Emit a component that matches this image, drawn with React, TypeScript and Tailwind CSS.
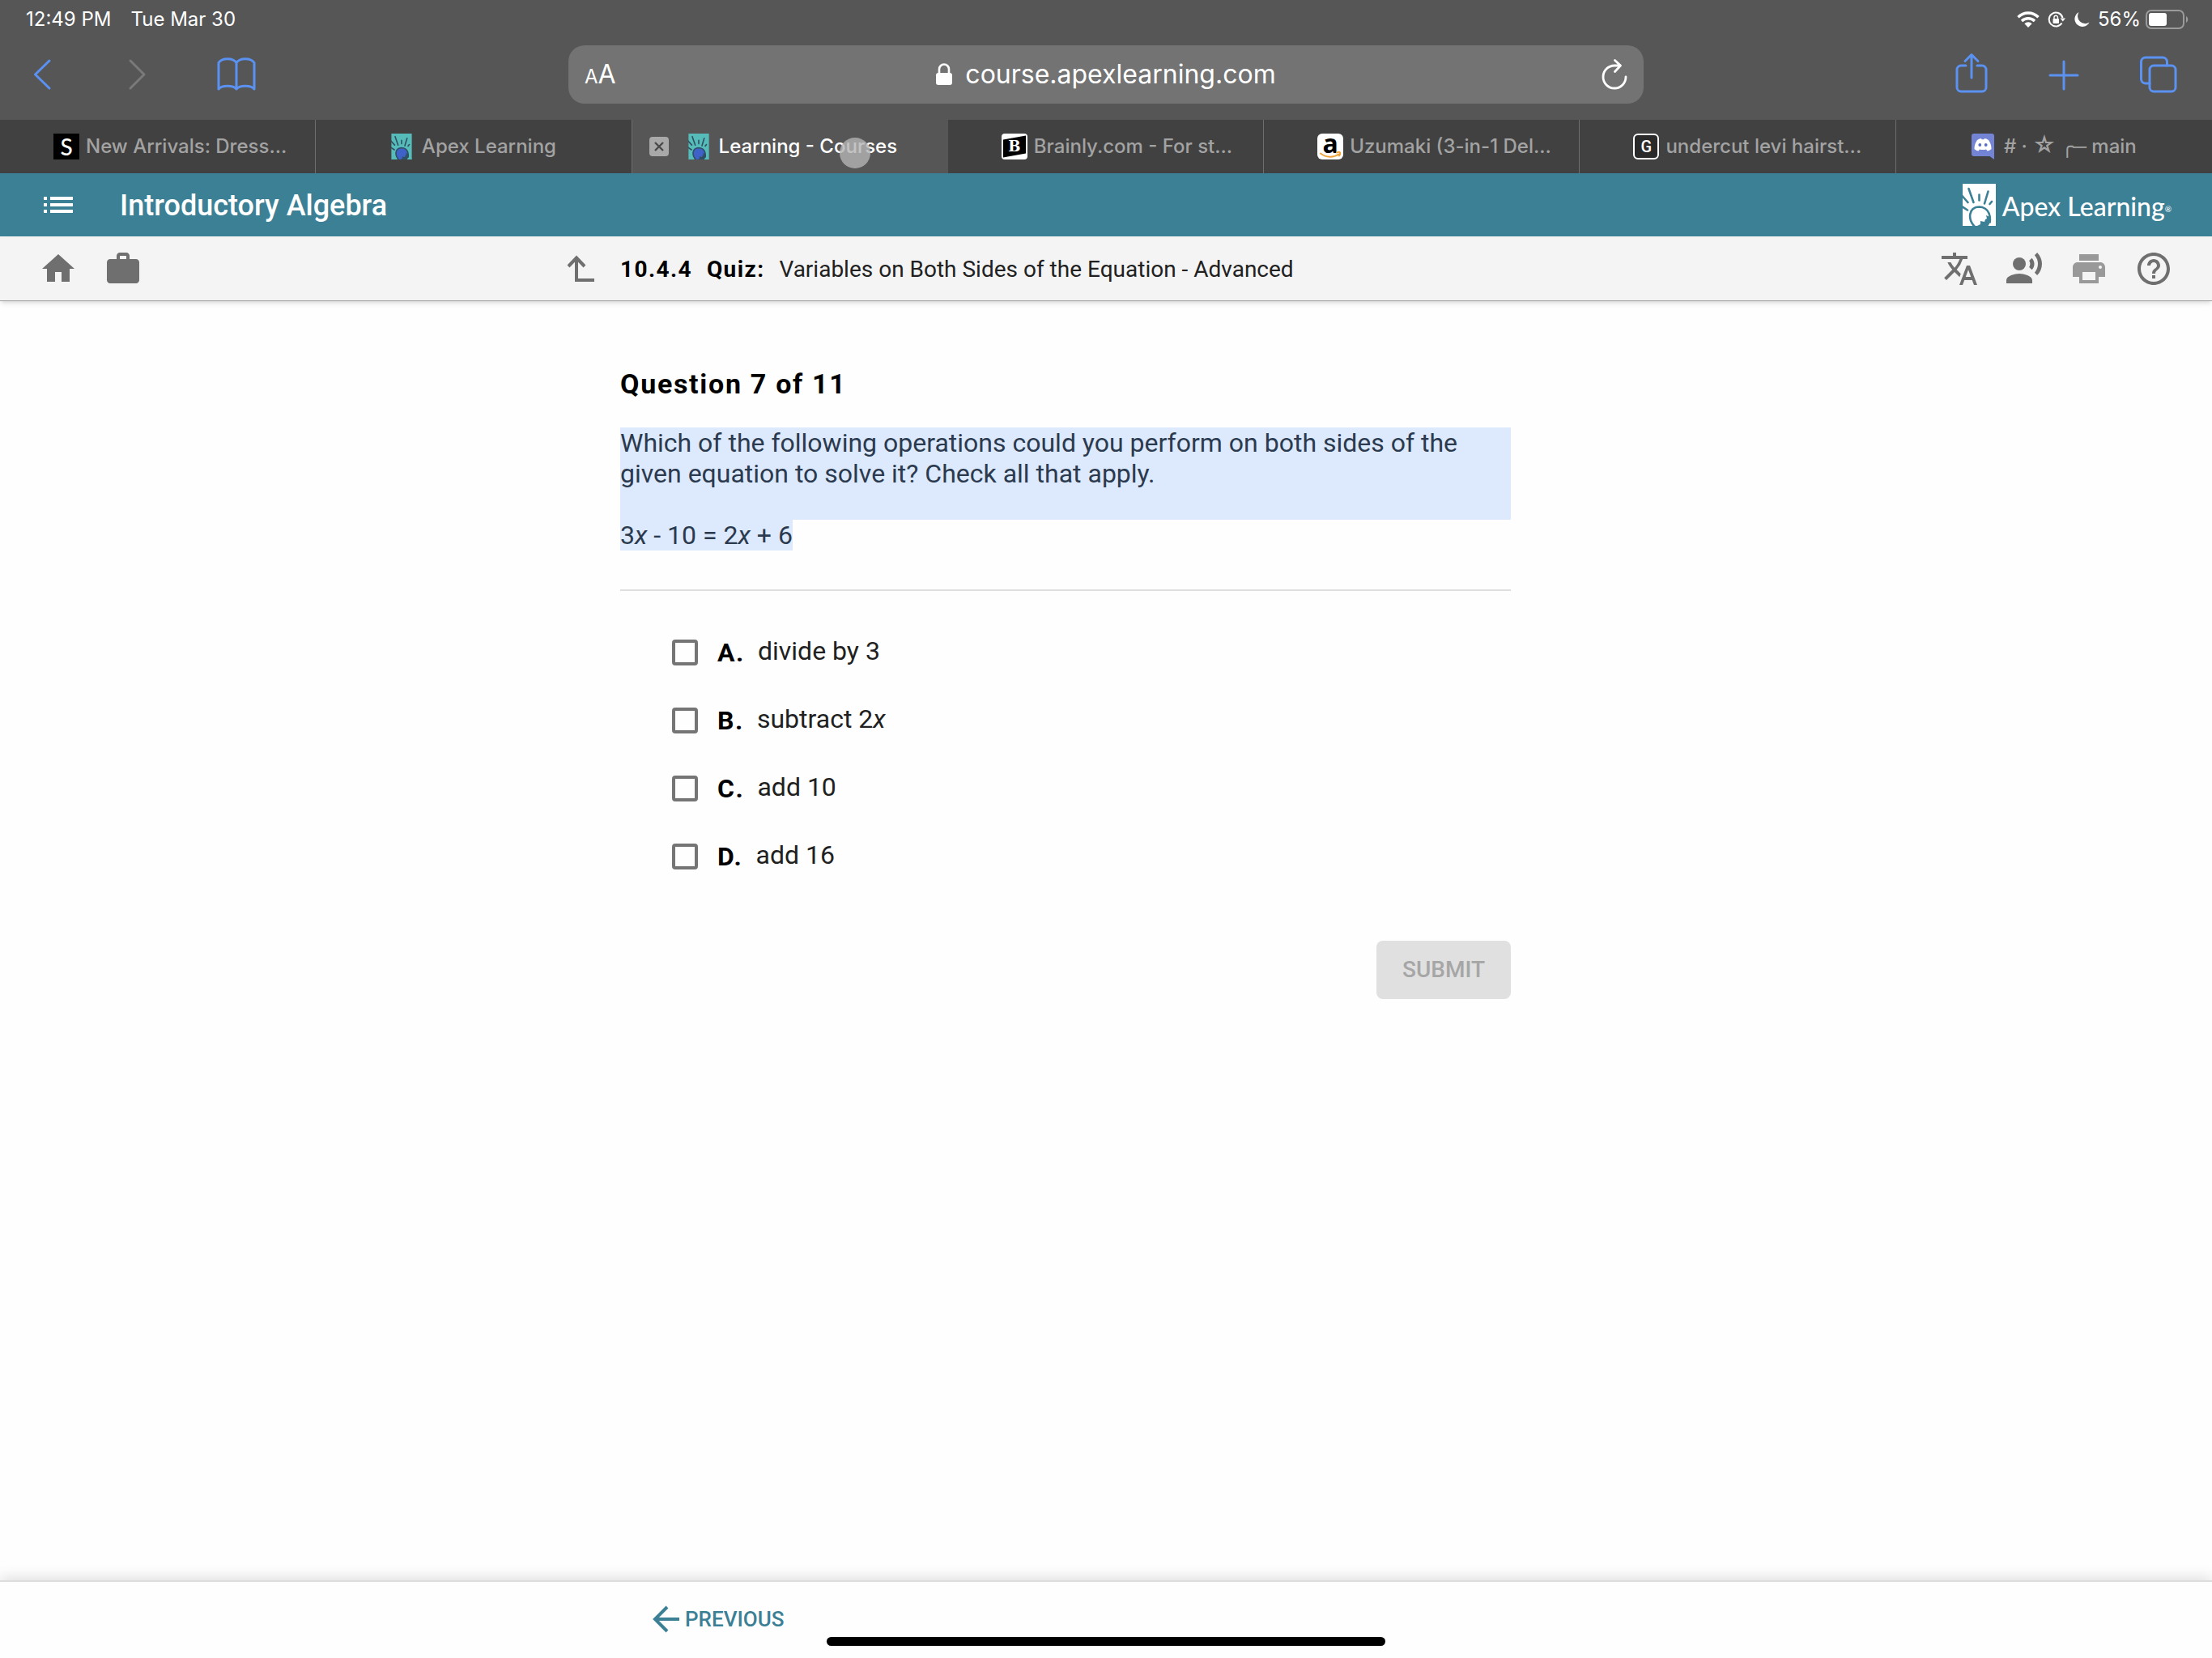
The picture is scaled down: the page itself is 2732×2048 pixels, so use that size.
import type { ReactNode } from "react";
import {
  MdHelpOutline,
  MdHome,
  MdList,
  MdPrint,
  MdRecordVoiceOver,
  MdTranslate,
  MdWork,
} from "react-icons/md";

type Tab = {
  title: ReactNode;
  icon: ReactNode;
  active?: boolean;
  long?: boolean;
};

const tabs: Tab[] = [
  { title: "New Arrivals: Dress...", icon: <SheinIcon />, long: true },
  { title: "Apex Learning", icon: <ApexFavicon /> },
  { title: "Learning - Courses", icon: <ApexFavicon />, active: true },
  { title: "Brainly.com - For st...", icon: <BrainlyIcon />, long: true },
  { title: "Uzumaki (3-in-1 Del...", icon: <AmazonIcon />, long: true },
  { title: "undercut levi hairst...", icon: <GIcon />, long: true },
  {
    title: (
      <span>
        # · <span className="text-[28px] leading-6">☆</span> ╭─ main
      </span>
    ),
    icon: <DiscordIcon />,
  },
];

const options: { letter: string; text: ReactNode }[] = [
  { letter: "A", text: "divide by 3" },
  {
    letter: "B",
    text: (
      <>
        subtract 2<i>x</i>
      </>
    ),
  },
  { letter: "C", text: "add 10" },
  { letter: "D", text: "add 16" },
];

function SheinIcon() {
  return (
    <span className="flex size-8 shrink-0 items-center justify-center bg-black font-['Lato'] text-[28px] leading-8 text-white">
      S
    </span>
  );
}

function ApexMark({
  className,
  bg,
  line,
  face,
}: {
  className: string;
  bg: string;
  line: string;
  face: string;
}) {
  return (
    <svg viewBox="0 0 41 52" className={className} aria-hidden="true">
      <path fill={bg} d="M0 0h41v52H0z" />
      <path
        fill={face}
        stroke={line}
        strokeWidth="2.6"
        d="M15 53C6 44 7 29 20.500 28.500C33 29 36 41 32.500 53"
      />
      <path fill={line} d="M18 52l4-2v-4l5 1 1-3 2-1-1-4 5 2-1 11z" />
      <g stroke={line} strokeWidth="2.6" strokeLinecap="round" fill="none">
        <path d="M7.500 6l6 17M20.500 13.500v7M31.500 9.500l-4.500 15M36 22l-2.500 3" />
        <path d="M-1 14.500l7.500 8.500M-1 28l7 4.500" />
      </g>
      <path fill={bg} d="M33.500 48.500h7V52h-9z" />
    </svg>
  );
}

function ApexFavicon() {
  return (
    <ApexMark
      className="h-8 w-[26px] shrink-0"
      bg="#56bcb9"
      line="#2f4f63"
      face="#3f62c8"
    />
  );
}

function BrainlyIcon() {
  return (
    <span className="relative flex size-8 shrink-0 items-center justify-center overflow-hidden rounded-sm bg-white">
      <svg viewBox="0 0 32 32" className="absolute inset-0" aria-hidden="true">
        <path d="M2 7.500L30 2.500v22L2 29.500z" />
      </svg>
      <span className="relative font-['DejaVu_Serif'] text-[18px] leading-8 font-bold text-white">
        B
      </span>
    </span>
  );
}

function AmazonIcon() {
  return (
    <span className="relative flex size-8 shrink-0 justify-center rounded-md bg-white">
      <span className="font-['Open_Sans'] text-[32px] leading-6 font-bold text-black">
        a
      </span>
      <svg
        viewBox="0 0 32 32"
        className="absolute inset-0"
        fill="none"
        stroke="#f0a33a"
        strokeWidth="2"
        strokeLinecap="round"
        aria-hidden="true"
      >
        <path d="M4 24.500c7 5.500 16 5.500 22.500 1M24 23.500c2-.8 3.500-.8 4 0s0 2.500-1 4" />
      </svg>
    </span>
  );
}

function GIcon() {
  return (
    <span className="flex size-8 shrink-0 items-center justify-center rounded-md border-2 border-white bg-[#2a2a2a] font-['Roboto'] text-[20px] font-medium text-white">
      G
    </span>
  );
}

function DiscordIcon() {
  return (
    <svg viewBox="0 0 28 32" className="h-8 w-7 shrink-0" aria-hidden="true">
      <path
        fill="#7384d4"
        d="M3 0h22a3 3 0 0 1 3 3v29l-5.500-4H3a3 3 0 0 1-3-3V3a3 3 0 0 1 3-3z"
      />
      <path
        fill="#fff"
        d="M7 8c2-1.300 3.600-1.800 5-2l.6 1.200h2.800L16 6c1.600.2 3.200.8 5 2 2.500 3.500 3.500 7 3.500 11-1.600 1.500-3.300 2.200-5 2.500l-1.400-2c-2.700.7-5.500.7-8.200 0l-1.400 2c-1.700-.3-3.400-1-5-2.500C3.500 15 4.500 11.500 7 8z"
      />
      <ellipse cx="10.300" cy="14" rx="1.900" ry="2.100" fill="#5d6fc4" />
      <ellipse cx="17.700" cy="14" rx="1.900" ry="2.100" fill="#5d6fc4" />
    </svg>
  );
}

function ToolbarIcon({ children }: { children: ReactNode }) {
  return (
    <svg
      viewBox="0 0 48 48"
      className="size-12 overflow-visible"
      fill="none"
      stroke="currentColor"
      strokeWidth="3"
      strokeLinecap="round"
      strokeLinejoin="round"
      aria-hidden="true"
    >
      {children}
    </svg>
  );
}

function StatusBar() {
  return (
    <div className="flex h-12 items-center justify-between pr-7 pl-8 text-[24px]">
      <div className="flex gap-6">
        <span>12:49 PM</span>
        <span>Tue Mar 30</span>
      </div>
      <div className="flex items-center gap-[10px]">
        <svg viewBox="0 0 28 20" className="h-5 w-7" aria-hidden="true">
          <g fill="none" stroke="#fff" strokeWidth="3.400">
            <path d="M1.500 7.200a17.500 17.500 0 0 1 25 0" />
            <path d="M6 12a11.500 11.500 0 0 1 16 0" />
          </g>
          <path fill="#fff" d="M14 20l-4.600-4.800a6.500 6.500 0 0 1 9.200 0z" />
        </svg>
        <svg viewBox="0 0 22 20" className="h-5 w-[22px]" aria-hidden="true">
          <path
            d="M17.500 14.500A8.500 8.500 0 1 1 18.500 8"
            fill="none"
            stroke="#fff"
            strokeWidth="2"
          />
          <path fill="#fff" d="M15.500 8.500h6.500l-3.200 4z" />
          <rect x="6.500" y="9" width="7.500" height="6" rx="1" fill="#fff" />
          <path
            d="M8 9V7.500a2.200 2.200 0 0 1 4.500 0V9"
            fill="none"
            stroke="#fff"
            strokeWidth="1.400"
          />
        </svg>
        <svg viewBox="0 0 20 20" className="size-5" aria-hidden="true">
          <path
            fill="#fff"
            d="M6.500 1A9.500 9.500 0 1 0 19.500 13.500 9.200 9.200 0 0 1 6.500 1z"
          />
        </svg>
        <span>56%</span>
        <svg viewBox="0 0 54 24" className="-ml-1 h-6 w-[54px]" aria-hidden="true">
          <rect
            x="1"
            y="1"
            width="46"
            height="22"
            rx="6"
            fill="none"
            stroke="#9b9b9b"
            strokeWidth="2"
          />
          <rect x="4" y="4" width="22" height="16" rx="3" fill="#fff" />
          <path fill="#9b9b9b" d="M50 8c3 1.500 3 6.500 0 8z" />
        </svg>
      </div>
    </div>
  );
}

function Toolbar() {
  return (
    <div className="grid h-[100px] grid-cols-[702fr_1328fr_702fr] items-start pt-2 text-[#5b92f2]">
      <div className="flex h-[72px] items-center gap-[72px] pl-7">
        <button aria-label="Back">
          <ToolbarIcon>
            <path d="M33 7L15.500 24 33 41" />
          </ToolbarIcon>
        </button>
        <button aria-label="Forward" className="text-[#7a7a7a]">
          <ToolbarIcon>
            <path d="M13 7l17 17-17 17" />
          </ToolbarIcon>
        </button>
        <button aria-label="Bookmarks">
          <ToolbarIcon>
            <path d="M24 9.500C20 3 6 3 2 9.500V42c4-5 18-5 22 0 4-5 18-5 22 0V9.500C42 3 28 3 24 9.500zM24 9.500V42" />
          </ToolbarIcon>
        </button>
      </div>

      <div className="grid h-[72px] grid-cols-[1fr_auto_1fr] items-center rounded-[20px] bg-[#737373] px-5 text-white">
        <button
          aria-label="Page settings"
          className="flex items-baseline justify-self-start"
        >
          <span className="text-[24px]">A</span>
          <span className="text-[32px]">A</span>
        </button>
        <label className="flex items-center gap-4">
          <svg viewBox="0 0 20 28" className="h-7 w-5" aria-label="Secure">
            <rect y="12" width="20" height="15" rx="3" fill="#fff" />
            <path
              d="M4 13V7.500a6 6 0 0 1 12 0V13"
              fill="none"
              stroke="#fff"
              strokeWidth="2.600"
            />
          </svg>
          <input
            aria-label="Address"
            defaultValue="course.apexlearning.com"
            className="field-sizing-content text-[32px] outline-none"
          />
        </label>
        <button aria-label="Reload" className="justify-self-end">
          <svg
            viewBox="0 0 34 40"
            className="h-10 w-[34px]"
            fill="none"
            stroke="#fff"
            strokeWidth="2.800"
            strokeLinecap="round"
            strokeLinejoin="round"
            aria-hidden="true"
          >
            <path d="M32 23a14 14 0 1 1-14-14h7M18.500 2.500L25.500 9l-7 7.500" />
          </svg>
        </button>
      </div>

      <div className="flex h-[72px] items-center justify-end gap-[68px] pr-[42px]">
        <button aria-label="Share">
          <ToolbarIcon>
            <path d="M18 13h-6a5 5 0 0 0-5 5v22a5 5 0 0 0 5 5h26a5 5 0 0 0 5-5V18a5 5 0 0 0-5-5h-6M25 28V0M17 7.500L25-.5l8 8" />
          </ToolbarIcon>
        </button>
        <button aria-label="New tab">
          <ToolbarIcon>
            <path d="M6 25h34M23 8v34" />
          </ToolbarIcon>
        </button>
        <button aria-label="Show tabs">
          <ToolbarIcon>
            <rect x="13" y="13" width="32" height="32" rx="5" />
            <path d="M13 35H8a5.500 5.500 0 0 1-5.500-5.500V8.500A5.500 5.500 0 0 1 8 3h21a5.500 5.500 0 0 1 5.500 5.500V13" />
          </ToolbarIcon>
        </button>
      </div>
    </div>
  );
}

function TabBar() {
  return (
    <div className="grid h-[66px] grid-cols-7 text-[24px] font-medium">
      {tabs.map((tab, index) =>
        tab.active ? (
          <div
            key={index}
            className="relative flex items-center gap-6 bg-[#565656] pl-[21px]"
          >
            <button
              aria-label="Close tab"
              className="flex size-6 items-center justify-center rounded-sm bg-[#a9a9a9]"
            >
              <svg viewBox="0 0 24 24" className="size-6" aria-hidden="true">
                <path
                  d="M7 7l10 10M17 7L7 17"
                  stroke="#4a4a4a"
                  strokeWidth="2.400"
                />
              </svg>
            </button>
            <button className="flex items-center gap-3 whitespace-nowrap text-white">
              {tab.icon}
              {tab.title}
            </button>
            {/* touch point */}
            <span className="absolute top-[22px] left-[256px] size-[38px] rounded-full bg-[#b4b4b4]/80" />
          </div>
        ) : (
          <button
            key={index}
            className={`flex items-center border-r border-[#6e6e6e] bg-[#414141] whitespace-nowrap text-[#a3a3a3] last:border-r-0 ${
              tab.long ? "gap-2 pl-[66px]" : "justify-center gap-3"
            }`}
          >
            {tab.icon}
            {tab.title}
          </button>
        ),
      )}
    </div>
  );
}

function CourseHeader() {
  return (
    <header>
      <div className="flex h-[78px] items-center justify-between bg-[#3c8096] pr-[50px] pl-12 text-white">
        <div className="flex items-center gap-[52px]">
          <button aria-label="Menu">
            <MdList className="size-12" />
          </button>
          <h1 className="pt-[2px] text-[36px] font-medium">
            Introductory Algebra
          </h1>
        </div>
        <a href="#" className="flex items-center gap-2">
          <ApexMark
            className="h-[52px] w-[41px]"
            bg="#fff"
            line="#3c8096"
            face="#fff"
          />
          <span className="pt-1 font-['Lato'] text-[32px] leading-[48px] font-medium">
            Apex Learning
            <sup className="text-[10px]">®</sup>
          </span>
        </a>
      </div>

      <div className="grid h-[80px] grid-cols-[1fr_1200px_1fr] items-center border-b border-[#a3a3a3] bg-[#f4f4f4] text-[#6f6f6f] shadow-md">
        <div className="flex items-center justify-between pr-7 pl-12">
          <div className="flex gap-8">
            <button aria-label="Home">
              <MdHome className="size-12" />
            </button>
            <button aria-label="Portfolio">
              <MdWork className="size-12" />
            </button>
          </div>
          <button aria-label="Up one level">
            <svg
              viewBox="0 0 40 40"
              className="size-10"
              fill="none"
              stroke="currentColor"
              strokeWidth="4"
              aria-hidden="true"
            >
              <path d="M4 17L14 6.500 24 17M14 7v27h22" />
            </svg>
          </button>
        </div>
        <h2 className="flex gap-[18px] pt-[2px] text-[28px] text-[#212121]">
          <b className="tracking-wider text-black">10.4.4</b>
          <b className="tracking-wider text-black">Quiz:</b>
          <span>Variables on Both Sides of the Equation - Advanced</span>
        </h2>
        <div className="flex justify-end gap-8 pr-12">
          <button aria-label="Translate">
            <MdTranslate className="size-12" />
          </button>
          <button aria-label="Read aloud">
            <MdRecordVoiceOver className="size-12" />
          </button>
          <button aria-label="Print" className="text-[#999999]">
            <MdPrint className="size-12" />
          </button>
          <button aria-label="Help">
            <MdHelpOutline className="size-12" />
          </button>
        </div>
      </div>
    </header>
  );
}

function Quiz() {
  return (
    <main className="mx-auto w-full max-w-[1200px] grow pt-[78px] pr-[100px]">
      <h3 className="text-[34px] leading-[48px] font-bold tracking-wider text-black">
        Question 7 of 11
      </h3>

      <div className="mt-[30px] border-b-2 border-[#dedede] pb-12 text-[32px] leading-[38px] text-[#2b3a4e]">
        <p className="bg-[#dde9fc] pb-[38px]">
          Which of the following operations could you perform on both sides of
          the given equation to solve it? Check all that apply.
        </p>
        <p className="w-fit bg-[#dde9fc]">
          3<i>x</i> - 10 = 2<i>x</i> + 6
        </p>
      </div>

      <ul className="mt-[52px] ml-16 flex flex-col gap-9 text-[32px] leading-[48px]">
        {options.map((option) => (
          <li key={option.letter}>
            <label className="flex items-center">
              <input
                type="checkbox"
                className="size-8 appearance-none rounded-sm border-4 border-[#757575]"
              />
              <b className="ml-6 tracking-wider text-black">
                {option.letter}.
              </b>
              <span className="ml-4 pb-1 leading-[44px] text-[#212121]">
                {option.text}
              </span>
            </label>
          </li>
        ))}
      </ul>

      <div className="mt-20 flex justify-end">
        <button
          disabled
          className="h-[72px] rounded-lg bg-[#e0e0e0] px-8 text-[28px] font-medium text-[#a6a6a6]"
        >
          SUBMIT
        </button>
      </div>
    </main>
  );
}

function Footer() {
  return (
    <footer className="relative h-24 border-t-2 border-[#dddddd] shadow-[0_-4px_16px_rgba(0,0,0,0.12)]">
      <div className="mx-auto w-full max-w-[1200px] pt-[26px] pl-9">
        <button className="flex items-center gap-1 text-[26px] font-medium text-[#3c8096]">
          <svg
            viewBox="0 0 40 40"
            className="size-10"
            fill="none"
            stroke="currentColor"
            strokeWidth="4"
            aria-hidden="true"
          >
            <path d="M22 5L7 20l15 15M7 20h30" />
          </svg>
          PREVIOUS
        </button>
      </div>
      {/* home indicator */}
      <div className="absolute bottom-[15px] left-1/2 h-[11px] w-[690px] -translate-x-1/2 rounded-full bg-black" />
    </footer>
  );
}

export default function App() {
  return (
    <div className="flex min-h-screen flex-col bg-[#fefefe] font-['Roboto',sans-serif]">
      <div className="bg-[#565656] font-['Inter',sans-serif] text-white">
        <StatusBar />
        <Toolbar />
        <TabBar />
      </div>
      <CourseHeader />
      <Quiz />
      <Footer />
    </div>
  );
}
